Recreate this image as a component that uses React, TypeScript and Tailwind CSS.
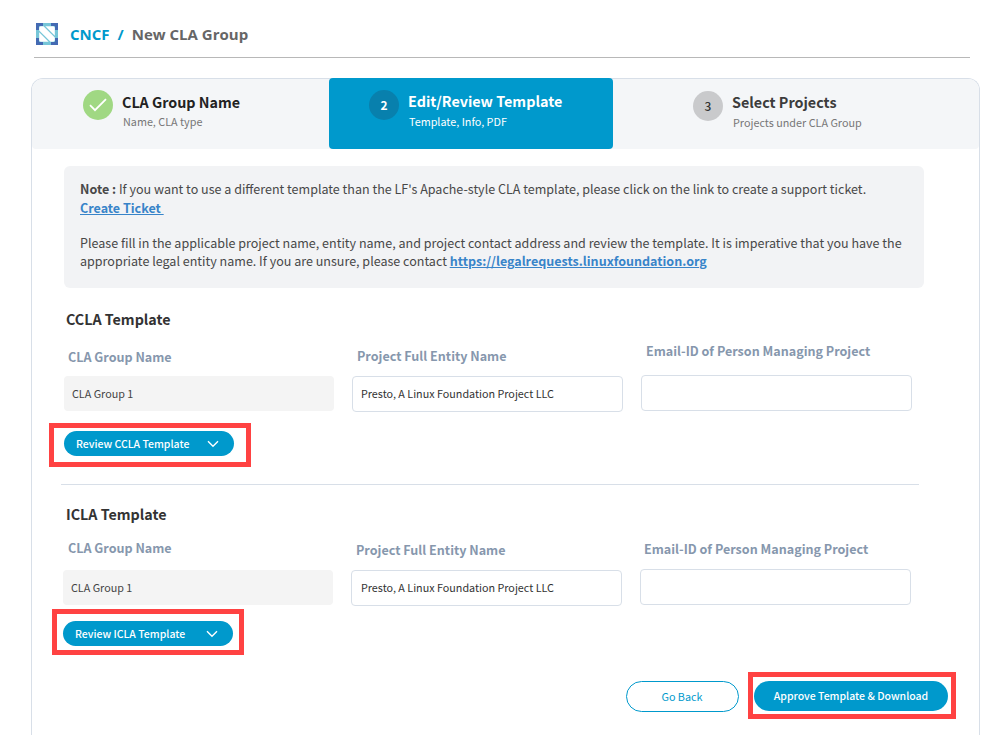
import React from "react";

const RED = "pointer-events-none absolute border-[5px] border-[#ff4242]";

function CncfLogo() {
  return (
    <svg width="22" height="22" viewBox="0 0 22 22" className="block">
      <rect width="22" height="22" fill="#76c6d8" />
      <path d="M0 0h7v3H3v4H0zM15 0h7v7h-3V3h-4zM0 15h3v4h4v3H0zM19 15h3v7h-7v-3h4z" fill="#446ab3" />
      <path d="M4.500 3.200h3L18.800 14.500v3l-1.300 1.300h-3L3.200 7.500v-3z" fill="#fff" />
      <path d="M9.300 3.200h8.200l1.300 1.300v8.200z" fill="#fff" />
      <path d="M3.200 9.300v8.200l1.300 1.300h8.200z" fill="#fff" />
    </svg>
  );
}

function Chevron() {
  return (
    <svg width="12" height="8" viewBox="0 0 12 8" fill="none" stroke="#fff" strokeWidth="1.4" className="block">
      <path d="M1 1.2l5 5 5-5" />
    </svg>
  );
}

function Field({ label, value, disabled, col, head, gap }: {
  label: string; value?: string; disabled?: boolean; col: string; head: string; gap: string;
}) {
  return (
    <div className={`flex flex-col ${col}`}>
      <label className={`block whitespace-nowrap text-[12.55px] font-bold leading-5 text-[#8697ad] ${head}`}>{label}</label>
      <div
        className={`flex items-center rounded text-[10.78px] whitespace-nowrap ${gap} ${
          disabled ? "h-[35px] w-[270px] bg-[#f4f4f4] px-2 text-[#444]" : "h-9 w-[271px] border border-[#d8dfe8] bg-white px-2 pb-px text-[#333]"
        }`}
      >
        {value}
      </div>
    </div>
  );
}

function ReviewButton({ text, frame }: { text: string; frame: string }) {
  return (
    <div className="relative h-[25px] w-[170px]">
      <button className="flex h-[25px] w-[170px] items-center justify-between rounded-full bg-[#0099cc] pl-3 pr-[15px] text-white">
        <span className="whitespace-nowrap pt-px text-[10.5px] font-medium leading-5">{text}</span>
        <Chevron />
      </button>
      <div className={`${RED} ${frame}`} />
    </div>
  );
}

export default function App() {
  return (
    <div className="flex h-[735px] w-[995px] flex-col overflow-hidden bg-white font-['Noto_Sans_CJK_SC',sans-serif] text-[#333]">
      <header className="ml-[34px] flex h-[58px] w-[936px] items-center border-b border-[#b8b8b8] pb-[11px] pl-[2px] pt-[22px]">
        <CncfLogo />
        <div className="ml-3 flex whitespace-pre font-['Open_Sans',sans-serif] text-[15px] font-bold leading-5">
          <span className="text-[#0099cc]">CNCF</span>
          <span className="ml-2 text-[#0099cc]">/</span>
          <span className="ml-2 text-[#666]">New CLA Group</span>
        </div>
      </header>

      <main className="ml-[31px] mt-5 h-[657px] w-[949px] shrink-0 rounded-t-xl border-x border-t border-[#d8dfe8]">
        <nav className="flex h-[70px] rounded-b rounded-t-[11px] bg-[#f4f6f8]">
          <div className="flex w-[297px] pl-[51px] pt-[11px]">
            <span className="flex size-[30px] items-center justify-center rounded-full bg-[#a0d883]">
              <svg width="18" height="14" viewBox="0 0 18 14" fill="none" stroke="#fff" strokeWidth="1.8">
                <path d="M1 7.2l5 5L17 1.2" />
              </svg>
            </span>
            <div className="ml-[9px] pt-[2px]">
              <div className="whitespace-nowrap text-[14.3px] font-bold leading-5 text-[#222]">CLA Group Name</div>
              <div className="whitespace-nowrap pl-px text-[10.8px] leading-[18px] text-[#777]">Name, CLA type</div>
            </div>
          </div>
          <div className="-mt-px flex h-[71px] w-[284px] rounded bg-[#0099cc] pl-10 pt-3 text-white">
            <span className="flex size-[30px] items-center justify-center rounded-full bg-[#0880ad] text-[12px] font-bold">2</span>
            <div className="ml-[9px]">
              <div className="whitespace-nowrap pt-px text-[14.35px] font-bold leading-5">Edit/Review Template</div>
              <div className="whitespace-nowrap pl-px pt-px text-[10.8px] leading-[18px]">Template, Info, PDF</div>
            </div>
          </div>
          <div className="flex flex-1 pl-20 pt-3">
            <span className="flex size-[30px] items-center justify-center rounded-full bg-[#c9cacc] text-[12px] font-medium">3</span>
            <div className="ml-[9px] pt-px">
              <div className="whitespace-nowrap text-[14.35px] font-bold leading-5 text-[#3c3c3c]">Select Projects</div>
              <div className="whitespace-nowrap pl-px pt-px text-[10.8px] leading-[18px] text-[#777]">Projects under CLA Group</div>
            </div>
          </div>
        </nav>

        <section className="ml-8 mt-[17px] h-[122px] w-[860px] rounded-md bg-[#f2f3f5] pl-4 pt-[14px] text-[12.54px] leading-[18px] text-[#484848]">
          <p className="whitespace-nowrap"><b>Note :</b> If you want to use a different template than the LF's Apache-style CLA template, please click on the link to create a support ticket.</p>
          <p className="mt-px"><a className="whitespace-pre font-bold text-[#3884c9] underline">Create Ticket </a></p>
          <p className="mt-[17px] whitespace-nowrap">Please fill in the applicable project name, entity name, and project contact address and review the template. It is imperative that you have the</p>
          <p className="whitespace-nowrap">appropriate legal entity name. If you are unsure, please contact <a className="font-bold text-[#3884c9] underline">https://legalrequests.linuxfoundation.org</a></p>
        </section>

        <section className="ml-8 mt-[21px]">
          <h2 className="ml-[2px] text-[14.3px] font-bold leading-5">CCLA Template</h2>
          <div className="flex h-[102px]">
            <Field label="CLA Group Name" value="CLA Group 1" disabled col="w-[288px] pt-[18px]" head="pl-1" gap="mt-[9px]" />
            <Field label="Project Full Entity Name" value="Presto, A Linux Foundation Project LLC" col="w-[289px] pt-[17px]" head="pl-[5px]" gap="mt-[10px]" />
            <Field label="Email-ID of Person Managing Project" col="w-[271px] pt-3" head="pl-[5px]" gap="mt-[14px]" />
          </div>
          <ReviewButton text="Review CCLA Template" frame="-left-[15px] -top-2 h-11 w-[202px]" />
        </section>

        <hr className="ml-[29px] mt-7 w-[858px] border-[#d8dfe8]" />

        <section className="ml-[31px] mt-[19px]">
          <h2 className="ml-[3px] text-[14.3px] font-bold leading-5">ICLA Template</h2>
          <div className="flex h-[97px]">
            <Field label="CLA Group Name" value="CLA Group 1" disabled col="w-[288px] pt-[14px]" head="pl-[5px]" gap="mt-[12px]" />
            <Field label="Project Full Entity Name" value="Presto, A Linux Foundation Project LLC" col="w-[289px] pt-[16px]" head="pl-[5px]" gap="mt-[10px] pl-[9px]" />
            <Field label="Email-ID of Person Managing Project" col="w-[271px] pt-[15px]" head="pl-1" gap="mt-[10px]" />
          </div>
          <ReviewButton text="Review ICLA Template" frame="-left-[11px] -top-3 h-[46px] w-[192px]" />
        </section>

        <footer className="ml-[594px] mt-[35px] flex">
          <button className="flex h-[31px] w-[113px] items-center justify-center rounded-full border border-[#0099cc] pr-px text-[10.8px] text-[#0099cc]">Go Back</button>
          <div className="relative ml-[15px]">
            <button className="flex h-[30px] w-[194px] items-center justify-center whitespace-nowrap rounded-full bg-[#0099cc] pb-px text-[10.5px] font-medium text-white">Approve Template &amp; Download</button>
            <div className={`${RED} -left-[6px] -top-[9px] h-[47px] w-[208px]`} />
          </div>
        </footer>
      </main>
    </div>
  );
}
